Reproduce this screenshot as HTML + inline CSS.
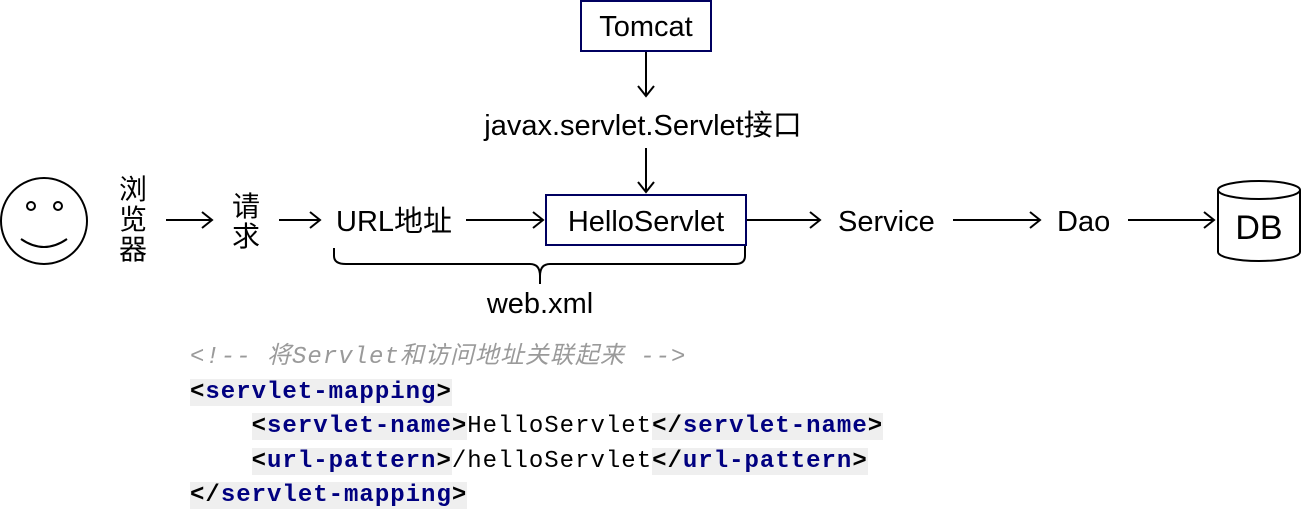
<!DOCTYPE html>
<html><head><meta charset="utf-8"><style>
html,body{margin:0;padding:0;background:#fff;width:1301px;height:524px;overflow:hidden;position:relative}
svg{position:absolute;left:0;top:0}
.t{font-family:"Liberation Sans","Noto Sans CJK SC",sans-serif;font-size:29px;fill:#000}
.cj{font-family:"Noto Sans CJK SC",sans-serif;font-size:28px;fill:#000}
.code{position:absolute;left:190px;top:341px;font-family:"Liberation Mono","Noto Sans CJK SC",monospace;font-size:24px;letter-spacing:1.0px;line-height:34.5px;white-space:pre}
.code div{height:34.5px}
.c{color:#9a9a9a;font-style:italic}
.g{background:#efefef}
.k{color:#000080;font-weight:bold}
.b{color:#000;font-weight:bold}
</style></head><body>
<svg width="1301" height="524" viewBox="0 0 1301 524" fill="none" stroke="#000" stroke-width="2">
<circle cx="44" cy="221" r="43"/>
<circle cx="31" cy="206" r="4"/>
<circle cx="58" cy="206" r="4"/>
<path d="M21 239 Q44 255 67 239"/>
<g stroke-width="2">
<path d="M166 220 H212 M202 212 L212 220 L202 228"/>
<path d="M279 220 H320 M310 212 L320 220 L310 228"/>
<path d="M466 220 H543 M533 212 L543 220 L533 228"/>
<path d="M747 220 H820 M810 212 L820 220 L810 228"/>
<path d="M953 220 H1040 M1030 212 L1040 220 L1030 228"/>
<path d="M1128 220 H1214 M1204 212 L1214 220 L1204 228"/>
<path d="M646 52 V96 M638 86 L646 96 L654 86"/>
<path d="M646 148 V192 M638 182 L646 192 L654 182"/>
</g>
<rect x="581" y="1" width="130" height="50" stroke="#000060" stroke-width="2"/>
<rect x="546" y="195" width="200" height="50" stroke="#000060" stroke-width="2"/>
<path d="M334 248 V256 Q334 264 346 264 H530 Q540 264 540 276 V284 M540 276 Q540 264 550 264 H735 Q745 264 745 256 V246"/>
<path d="M1218 190 V252 A41 9 0 0 0 1300 252 V190"/>
<ellipse cx="1259" cy="190" rx="41" ry="9"/>
<g stroke="none">
<text class="t" x="646" y="36" text-anchor="middle">Tomcat</text>
<text class="t" x="643" y="135" text-anchor="middle">javax.servlet.Servlet接口</text>
<text class="t" x="646" y="231" text-anchor="middle">HelloServlet</text>
<text class="t" x="336" y="231">URL地址</text>
<text class="t" x="838" y="231">Service</text>
<text class="t" x="1057" y="231">Dao</text>
<text class="t" x="540" y="313" text-anchor="middle">web.xml</text>
<text class="t" x="1259" y="239" text-anchor="middle" style="font-size:34px">DB</text>
<text class="cj" x="119" y="199">浏</text>
<text class="cj" x="119" y="229">览</text>
<text class="cj" x="119" y="259">器</text>
<text class="cj" x="232" y="216">请</text>
<text class="cj" x="232" y="246">求</text>
</g>
</svg>
<div class="code"><div class="c">&lt;!-- 将Servlet和访问地址关联起来 --&gt;</div><div><span class="g"><span class="b">&lt;</span><span class="k">servlet-mapping</span><span class="b">&gt;</span></span></div><div>    <span class="g"><span class="b">&lt;</span><span class="k">servlet-name</span><span class="b">&gt;</span></span>HelloServlet<span class="g"><span class="b">&lt;/</span><span class="k">servlet-name</span><span class="b">&gt;</span></span></div><div>    <span class="g"><span class="b">&lt;</span><span class="k">url-pattern</span><span class="b">&gt;</span></span>/helloServlet<span class="g"><span class="b">&lt;/</span><span class="k">url-pattern</span><span class="b">&gt;</span></span></div><div><span class="g"><span class="b">&lt;/</span><span class="k">servlet-mapping</span><span class="b">&gt;</span></span></div></div>
</body></html>
